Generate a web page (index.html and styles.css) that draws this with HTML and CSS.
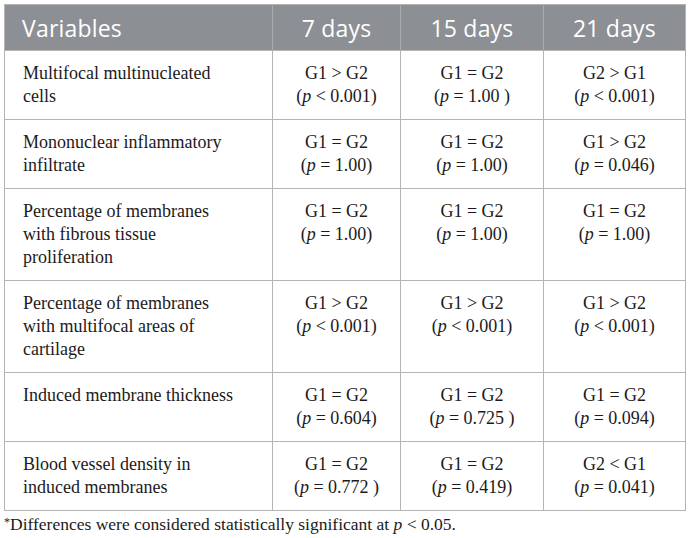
FILE: index.html
```html
<!DOCTYPE html>
<html lang="en">
<head>
    <meta charset="UTF-8">
    <title>Membrane comparison table</title>
    <link rel="stylesheet" href="styles.css">
</head>
<body>
<div class="wrap">
    <table class="results">
        <colgroup>
            <col class="col-var">
            <col class="col-7">
            <col class="col-15">
            <col class="col-21">
        </colgroup>
        <thead>
            <tr>
                <th class="var-head">Variables</th>
                <th>7 days</th>
                <th>15 days</th>
                <th>21 days</th>
            </tr>
        </thead>
        <tbody>
            <tr>
                <td class="var">Multifocal multinucleated<br>cells</td>
                <td>G1 &gt; G2<br>(<i>p</i> &lt; 0.001)</td>
                <td>G1 = G2<br>(<i>p</i> = 1.00 )</td>
                <td>G2 &gt; G1<br>(<i>p</i> &lt; 0.001)</td>
            </tr>
            <tr>
                <td class="var">Mononuclear inflammatory<br>infiltrate</td>
                <td>G1 = G2<br>(<i>p</i> = 1.00)</td>
                <td>G1 = G2<br>(<i>p</i> = 1.00)</td>
                <td>G1 &gt; G2<br>(<i>p</i> = 0.046)</td>
            </tr>
            <tr>
                <td class="var">Percentage of membranes<br>with fibrous tissue<br>proliferation</td>
                <td>G1 = G2<br>(<i>p</i> = 1.00)</td>
                <td>G1 = G2<br>(<i>p</i> = 1.00)</td>
                <td>G1 = G2<br>(<i>p</i> = 1.00)</td>
            </tr>
            <tr>
                <td class="var">Percentage of membranes<br>with multifocal areas of<br>cartilage</td>
                <td>G1 &gt; G2<br>(<i>p</i> &lt; 0.001)</td>
                <td>G1 &gt; G2<br>(<i>p</i> &lt; 0.001)</td>
                <td>G1 &gt; G2<br>(<i>p</i> &lt; 0.001)</td>
            </tr>
            <tr>
                <td class="var">Induced membrane thickness</td>
                <td>G1 = G2<br>(<i>p</i> = 0.604)</td>
                <td>G1 = G2<br>(<i>p</i> = 0.725 )</td>
                <td>G1 = G2<br>(<i>p</i> = 0.094)</td>
            </tr>
            <tr>
                <td class="var">Blood vessel density in<br>induced membranes</td>
                <td>G1 = G2<br>(<i>p</i> = 0.772 )</td>
                <td>G1 = G2<br>(<i>p</i> = 0.419)</td>
                <td>G2 &lt; G1<br>(<i>p</i> = 0.041)</td>
            </tr>
        </tbody>
    </table>
    <p class="note"><sup>*</sup>Differences were considered statistically significant at <i>p</i> &lt; 0.05.</p>
</div>
</body>
</html>
```

FILE: styles.css
```css
* {
    box-sizing: border-box;
}
body {
    margin: 0;
    background: #fff;
    color: #1c1a1b;
    font-family: "Liberation Serif", "Times New Roman", serif;
}
.wrap {
    padding: 4px;
}
.results {
    width: 681px;
    border-collapse: collapse;
    table-layout: fixed;
    border: 1px solid #b4b4b4;
}
.col-var { width: 268px; }
.col-7 { width: 128px; }
.col-15 { width: 143px; }
.col-21 { width: 142px; }
th {
    background-color: #8c9094;
    color: #fff;
    font-family: "Open Sans", sans-serif;
    font-weight: normal;
    font-size: 23px;
    letter-spacing: 0.2px;
    height: 46px;
    padding: 0 8px;
    text-align: center;
    border-left: 1px solid #a9acaf;
}
th.var-head {
    text-align: left;
    border-left: none;
    padding-left: 17px;
}
td {
    border: 1px solid #b4b4b4;
    padding: 11px 8px;
    font-size: 18px;
    line-height: 23px;
    text-align: center;
    vertical-align: top;
}
td.var {
    text-align: left;
    padding-left: 18px;
}
.note {
    margin: 3px 0 0;
    font-size: 17.5px;
    line-height: 20px;
}
.note sup {
    font-size: 12px;
    vertical-align: 4px;
    line-height: 0;
}
```
